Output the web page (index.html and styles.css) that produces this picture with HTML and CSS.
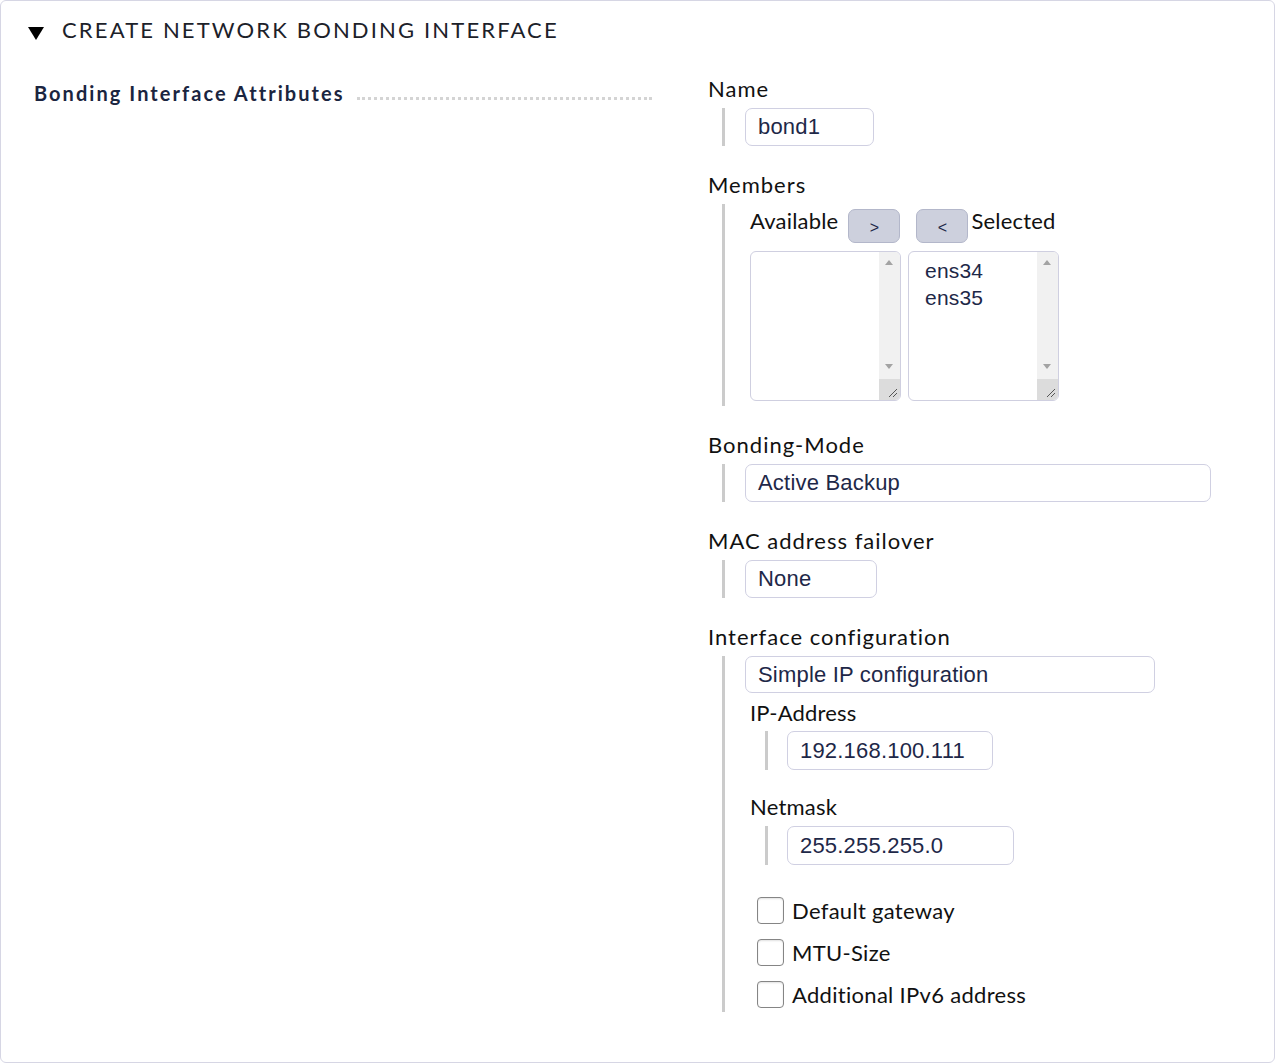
FILE: index.html
```html
<!DOCTYPE html>
<html>
<head>
<meta charset="utf-8">
<link rel="stylesheet" href="styles.css">
</head>
<body>
<div class="box">
  <div class="header">
    <svg class="tri" width="16" height="13" viewBox="0 0 16 13"><polygon points="0,0 16,0 8,13" fill="#000"/></svg>
    <span class="title">CREATE NETWORK BONDING INTERFACE</span>
  </div>
  <div class="content">
    <div class="left">
      <span class="section">Bonding Interface Attributes</span>
      <span class="dots"></span>
    </div>
    <div class="right">
      <div class="field">
        <div class="label">Name</div>
        <div class="value"><div class="input w-name">bond1</div></div>
      </div>
      <div class="field">
        <div class="label">Members</div>
        <div class="value members">
          <div class="mrow">
            <span class="mlabel">Available</span>
            <span class="btn">&gt;</span>
            <span class="btn btn2">&lt;</span>
            <span class="mlabel">Selected</span>
          </div>
          <div class="lists">
            <div class="listbox">
              <div class="items"></div>
              <div class="sbar"><span class="up"></span><span class="down"></span><span class="corner"><svg width="10" height="10" viewBox="0 0 10 10"><path d="M1 9 L9 1 M5 9 L9 5" stroke="#555" stroke-width="1"/></svg></span></div>
            </div>
            <div class="listbox">
              <div class="items"><div>ens34</div><div>ens35</div></div>
              <div class="sbar"><span class="up"></span><span class="down"></span><span class="corner"><svg width="10" height="10" viewBox="0 0 10 10"><path d="M1 9 L9 1 M5 9 L9 5" stroke="#555" stroke-width="1"/></svg></span></div>
            </div>
          </div>
        </div>
      </div>
      <div class="field">
        <div class="label">Bonding-Mode</div>
        <div class="value"><div class="input w-mode">Active Backup</div></div>
      </div>
      <div class="field">
        <div class="label">MAC address failover</div>
        <div class="value"><div class="input w-mac">None</div></div>
      </div>
      <div class="field">
        <div class="label">Interface configuration</div>
        <div class="value iface">
          <div class="input w-cfg">Simple IP configuration</div>
          <div class="sub first">
            <div class="label sublabel">IP-Address</div>
            <div class="subvalue"><div class="input w-ip">192.168.100.111</div></div>
          </div>
          <div class="sub">
            <div class="label sublabel">Netmask</div>
            <div class="subvalue"><div class="input w-nm">255.255.255.0</div></div>
          </div>
          <div class="checks">
            <label class="check"><span class="cb"></span>Default gateway</label>
            <label class="check"><span class="cb"></span>MTU-Size</label>
            <label class="check"><span class="cb"></span>Additional IPv6 address</label>
          </div>
        </div>
      </div>
    </div>
  </div>
</div>
</body>
</html>
```

FILE: styles.css
```css
html, body { margin: 0; padding: 0; background: #fff; }
body { font-family: Lato, "Liberation Sans", sans-serif; color: #111; }
.box {
  width: 1275px; height: 1063px; box-sizing: border-box;
  border: 1px solid #d6d6e4; border-radius: 6px; background: #fff;
}
.header { display: flex; align-items: center; padding: 16px 0 0 27px; height: 26px; }
.tri { margin-top: 6px; }
.title { margin-left: 18px; font-size: 22px; letter-spacing: 2.15px; color: #1c2129; line-height: 26px; }
.content { display: flex; }
.left { width: 651px; padding-left: 33px; box-sizing: border-box; display: flex; align-items: flex-end; padding-top: 37px; height: 63px; }
.section { font-weight: bold; font-size: 20px; letter-spacing: 2.05px; color: #1b2540; white-space: nowrap; line-height: 26px; }
.dots { flex: 1; margin-left: 12px; border-bottom: 3px dotted #d4d4d4; margin-bottom: 6px; }
.right { margin-left: 56px; padding-top: 33px; }
.field { margin-bottom: 26px; }
.label { font-size: 22px; line-height: 26px; color: #111; margin-bottom: 6px; white-space: nowrap; letter-spacing: 1px; }
.value { margin-left: 14px; border-left: 3px solid #cbcbcb; padding-left: 20px; }
.input {
  box-sizing: border-box; height: 38px; border: 1px solid #d0d0e2; border-radius: 7px;
  font-family: "Liberation Sans", Arial, sans-serif; font-size: 22px; color: #1e2848;
  padding-left: 12px; line-height: 36px; background: #fff; white-space: nowrap; letter-spacing: 0.2px;
}
.w-name { width: 129px; }
.w-mode { width: 466px; }
.w-mac { width: 132px; }
.w-cfg { width: 410px; height: 37px; line-height: 35px; }
.w-ip { width: 206px; height: 39px; line-height: 37px; }
.w-nm { width: 227px; height: 39px; line-height: 37px; padding-left: 12px; }
.members { padding: 5px 0 5px 25px; }
.mrow { display: flex; align-items: center; height: 34px; }
.mlabel { font-size: 22px; color: #111; position: relative; top: -6px; letter-spacing: 0.2px; }
.btn {
  box-sizing: border-box; width: 52px; height: 34px; margin-left: 10px;
  background: #cdd0dd; border: 1px solid #b3b7ca; border-radius: 7px;
  display: flex; align-items: center; justify-content: center; padding-top: 4px;
  font-family: "Liberation Sans", sans-serif; font-size: 16px; color: #1e2848;
}
.btn2 { margin-left: 16px; margin-right: 3px; }
.lists { display: flex; gap: 7px; margin-top: 8px; }
.listbox {
  box-sizing: border-box; width: 151px; height: 150px; border: 1px solid #cfcfe0; border-radius: 6px;
  display: flex; overflow: hidden;
}
.items { flex: 1; padding: 5px 0 0 16px; font-family: "Liberation Sans", sans-serif; font-size: 21px; color: #1e2848; line-height: 27px; letter-spacing: 0.2px; }
.sbar { width: 21px; background: #f1f1f1; position: relative; }
.up, .down { position: absolute; left: 6px; width: 0; height: 0; border-left: 4.5px solid transparent; border-right: 4.5px solid transparent; }
.up { top: 8px; border-bottom: 5px solid #a3a3a3; }
.down { top: 112px; border-top: 5px solid #a3a3a3; }
.corner { position: absolute; left: 0; bottom: 0; width: 21px; height: 21px; background: #dcdcdc; display: flex; align-items: flex-end; justify-content: flex-end; }
.corner svg { margin: 0 2px 2px 0; }
.iface { padding-bottom: 4px; }
.sub { padding-left: 5px; margin-top: 7px; }
.sub + .sub { margin-top: 24px; }
.sublabel { margin-bottom: 5px; letter-spacing: 0.2px; }
.sub + .sub .sublabel { margin-bottom: 6px; }
.subvalue { margin-left: 15px; border-left: 3px solid #cbcbcb; padding-left: 19px; }
.checks { margin-top: 32px; padding-left: 12px; display: flex; flex-direction: column; gap: 15px; }
.check { display: flex; align-items: center; height: 27px; font-size: 22px; color: #111; letter-spacing: 0.3px; }
.cb {
  box-sizing: border-box; width: 27px; height: 27px; border: 1.5px solid #858585; border-radius: 4px;
  background: #fff; margin-right: 8px; box-shadow: inset 0 1px 2px rgba(0,0,0,0.12);
}
```
